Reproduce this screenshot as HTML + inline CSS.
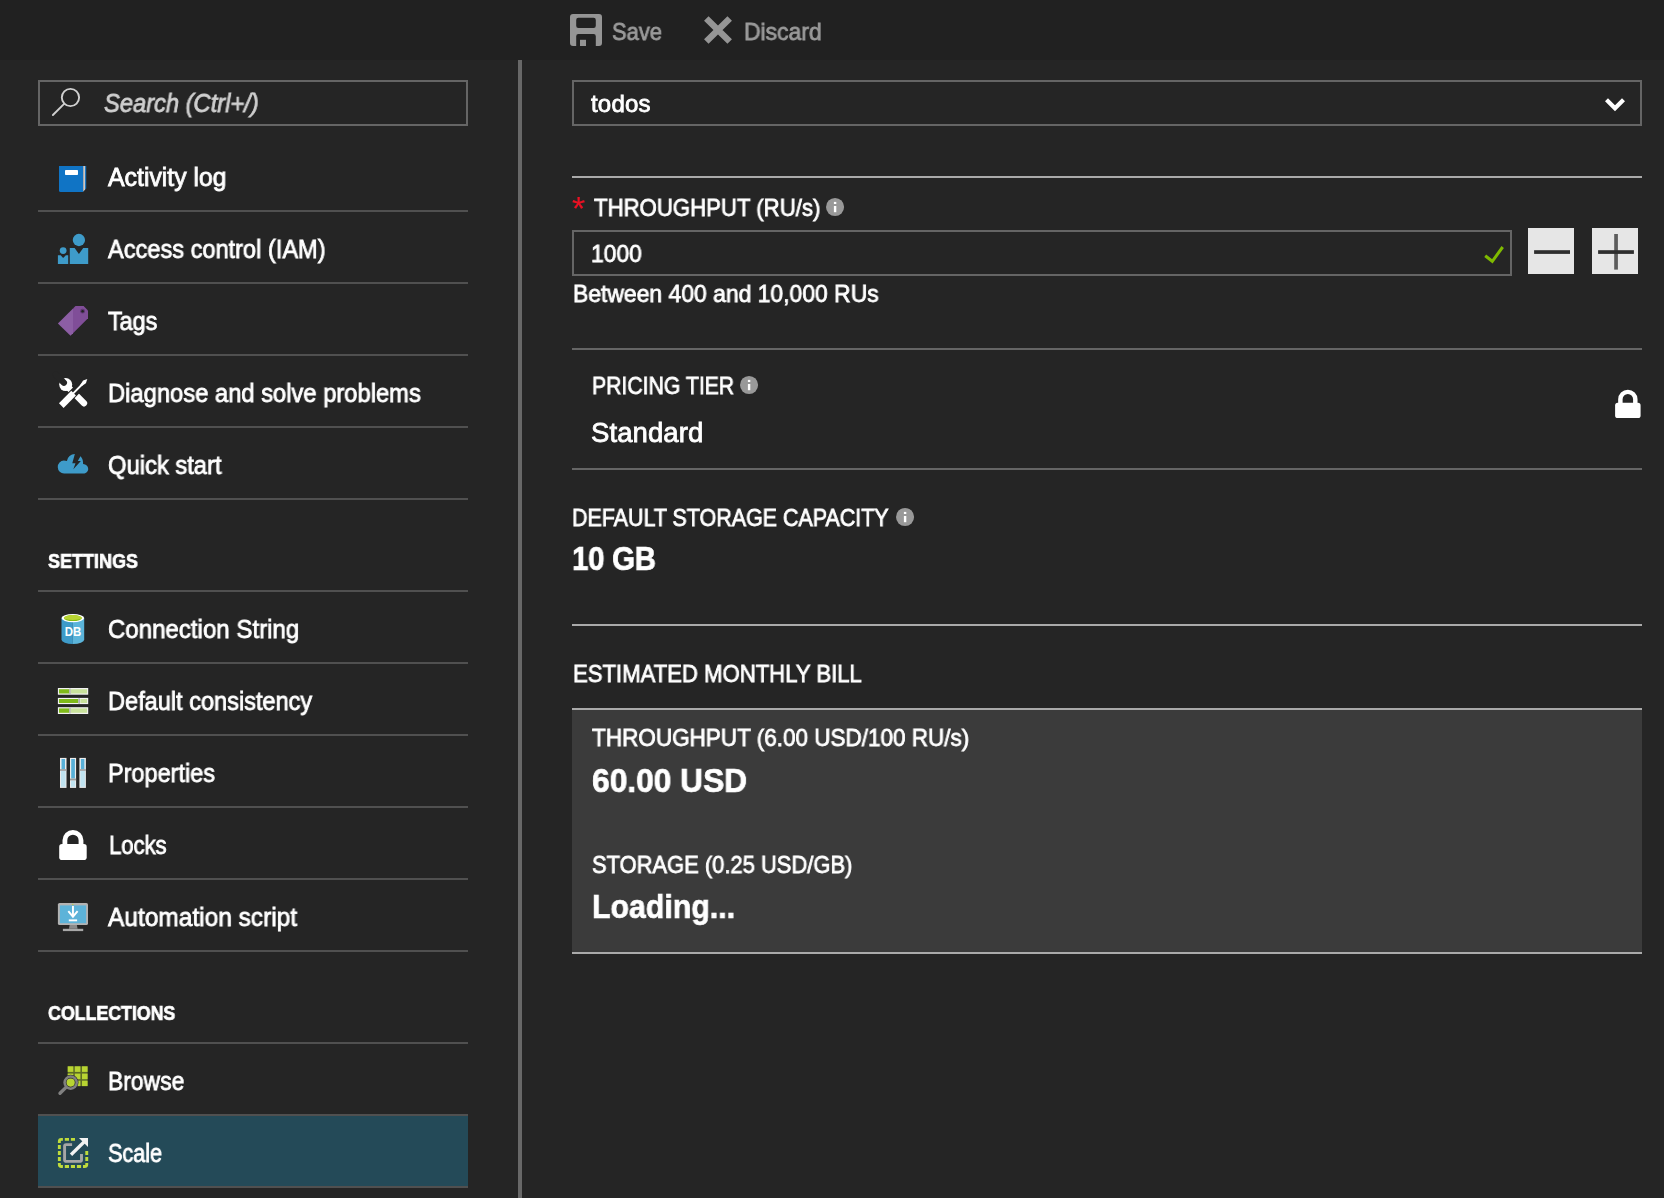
<!DOCTYPE html>
<html lang="en">
<head>
<meta charset="utf-8">
<title>Scale - Azure Cosmos DB</title>
<style>
html,body{margin:0;padding:0;}
body{width:1664px;height:1198px;overflow:hidden;background:#252525;font-family:"Liberation Sans",sans-serif;color:#fff;position:relative;}
.abs{position:absolute;}
.topbar{left:0;top:0;width:1664px;height:60px;background:#212121;}
.vdiv{left:518px;top:60px;width:4px;height:1138px;background:#686868;}
.hl{height:2px;background:#505050;}
.sl{left:38px;width:430px;}
.ml{left:572px;width:1070px;}
.box{box-sizing:border-box;border:2px solid #656565;}
.t{position:absolute;white-space:nowrap;margin:0;padding:0;transform-origin:0 50%;-webkit-text-stroke:0.8px;will-change:transform;}
.b{-webkit-text-stroke:0.7px;}
.sel{left:38px;top:1116px;width:430px;height:70px;background:#244a58;}
.bill{left:572px;top:710px;width:1070px;height:242px;background:#3b3b3b;}
.btn{width:46px;height:46px;top:228px;background:#e6e6e6;}
/*FITCSS*/
</style>
</head>
<body>
<div class="abs topbar deco"></div>
<div class="abs vdiv deco"></div>

<!-- sidebar -->
<div class="abs box deco" style="left:38px;top:80px;width:430px;height:46px;"></div>
<div class="abs hl sl deco" style="top:210px"></div>
<div class="abs hl sl deco" style="top:282px"></div>
<div class="abs hl sl deco" style="top:354px"></div>
<div class="abs hl sl deco" style="top:426px"></div>
<div class="abs hl sl deco" style="top:498px"></div>
<div class="abs hl sl deco" style="top:590px"></div>
<div class="abs hl sl deco" style="top:662px"></div>
<div class="abs hl sl deco" style="top:734px"></div>
<div class="abs hl sl deco" style="top:806px"></div>
<div class="abs hl sl deco" style="top:878px"></div>
<div class="abs hl sl deco" style="top:950px"></div>
<div class="abs hl sl deco" style="top:1042px"></div>
<div class="abs hl sl deco" style="top:1114px"></div>
<div class="abs sel deco"></div>
<div class="abs hl sl deco" style="top:1186px"></div>

<!-- main -->
<div class="abs box deco" style="left:572px;top:80px;width:1070px;height:46px;"></div>
<div class="abs hl ml deco" style="top:176px;background:#aaaaaa"></div>
<div class="abs box deco" style="left:572px;top:230px;width:940px;height:46px;"></div>
<div class="abs btn deco" style="left:1528px"></div>
<div class="abs btn deco" style="left:1592px"></div>
<div class="abs hl ml deco" style="top:348px;background:#656565"></div>
<div class="abs hl ml deco" style="top:468px;background:#656565"></div>
<div class="abs hl ml deco" style="top:624px;background:#aaaaaa"></div>
<div class="abs bill deco"></div>
<div class="abs hl ml deco" style="top:708px;background:#aaaaaa"></div>
<div class="abs hl ml deco" style="top:952px;background:#aaaaaa"></div>

<svg class="ico" width="1664" height="1198" viewBox="0 0 1664 1198" style="position:absolute;left:0;top:0;overflow:visible">
<!-- save icon -->
<g fill="#959595">
<path fill-rule="evenodd" d="M573 14h26a3 3 0 0 1 3 3v26a3 3 0 0 1-3 3h-3.2V36.2a2.2 2.2 0 0 0-2.2-2.2H578.4a2.2 2.2 0 0 0-2.2 2.2V46H573a3 3 0 0 1-3-3V17a3 3 0 0 1 3-3zM578.4 17.8a2.2 2.2 0 0 0-2.2 2.2v5.8a2.2 2.2 0 0 0 2.2 2.2h15.2a2.2 2.2 0 0 0 2.2-2.2V20a2.2 2.2 0 0 0-2.2-2.2z"/>
<rect x="580" y="39.8" width="6" height="6.2"/>
</g>
<!-- discard X -->
<g stroke="#959595" stroke-width="6.4" stroke-linecap="butt" fill="none">
<path d="M706.3 18.4L729.7 41.6M729.7 18.4L706.3 41.6"/>
</g>
<!-- search magnifier -->
<g stroke="#d0d0d0" stroke-width="1.9" fill="none" stroke-linecap="round">
<circle cx="70.45" cy="97.5" r="8.65"/>
<path d="M64.1 103.8L52.9 115"/>
</g>
<!-- activity log book -->
<g>
<path d="M59 166h24.2v26H60.5a1.5 1.5 0 0 1-1.5-1.5z" fill="#1074c5"/>
<path d="M83.2 166h1.9v23.6l-1.9 2.2z" fill="#c8c8c8"/>
<path d="M85.1 166h1.1v22.4l-1.1 1.2z" fill="#1c7fd0"/>
<rect x="65" y="170" width="13" height="5" rx="0.8" fill="#ffffff"/>
</g>
<!-- IAM -->
<g fill="#3e9bc9">
<circle cx="78.9" cy="240" r="6.15"/>
<path d="M69.8 248h4.8l4.3 5.9 4.3-5.9h5V263.9H69.8z"/>
<circle cx="63.15" cy="250.6" r="3.4"/>
<path d="M57.9 255.2h2.75l2.5 2.7 2.7-2.7h2.35V263.9H57.9z"/>
</g>
<!-- tag -->
<g>
<path d="M57.9 323.4L73 308.5V333.2L70.5 335.7z" fill="#8c5ea4"/>
<path d="M73 308.5L75.5 306.1H83.6L88 310.5V318.2L73 333.2z" fill="#804e98"/>
<circle cx="82.6" cy="311.2" r="2.4" fill="#5e3872"/>
<circle cx="82.6" cy="311.2" r="1.25" fill="#252525"/>
</g>
<!-- tools -->
<g>
<!-- wrench -->
<path d="M66 385L84 403.3" stroke="#fff" stroke-width="6.3" stroke-linecap="round" fill="none"/>
<circle cx="65.7" cy="384.6" r="6.5" fill="#fff"/>
<path d="M63.9 382.7L56 374.8" stroke="#252525" stroke-width="6.2" stroke-linecap="round" fill="none"/>
<!-- screwdriver outline gap -->
<path d="M61.3 405.6L73.4 393.3L85 381.2" stroke="#252525" stroke-width="8.6" stroke-linecap="butt" fill="none"/>
<path d="M73.4 393.3L86.5 379.9" stroke="#252525" stroke-width="4.2" stroke-linecap="butt" fill="none"/>
<!-- screwdriver -->
<path d="M61.3 405.6L73.6 393.1" stroke="#fff" stroke-width="6.5" stroke-linecap="butt" fill="none"/>
<path d="M73 393.7L82.5 384" stroke="#fff" stroke-width="1.9" fill="none"/>
<path d="M87.3 379.1L85.9 383.3L81.6 386.3L80.2 384.9L83.1 380.5z" fill="#fff"/>
</g>
<!-- quick start cloud -->
<g>
<path d="M64.2 473.5a6.3 6.5 0 0 1-.3-13c1.1 0 2.1.2 3 .6A8 8 0 0 1 74.9 454.1c4.300 0 7.900 3.400 8.100 7.800l.1 2.1c2.900.3 5.100 2.300 5.100 4.900 0 2.600-2.200 4.600-4.900 4.600z" fill="#3e9bc9"/>
<path d="M75.4 452L72.3 463.2H75.5L73.3 469.2L80.9 460.9H77.8L80.9 455.6L83 452z" fill="#252525"/>
</g>
<!-- DB cylinder -->
<g>
<path d="M61.5 618.1V639.8A11.35 4.2 0 0 0 72.85 644V618.1z" fill="#3e9bc9"/>
<path d="M84.2 618.1V639.8A11.35 4.2 0 0 1 72.85 644V618.1z" fill="#5bb4da"/>
<ellipse cx="72.85" cy="618.1" rx="11.35" ry="4.2" fill="#ffffff"/>
<clipPath id="dbclip"><ellipse cx="72.85" cy="618.1" rx="9" ry="3"/></clipPath>
<ellipse cx="72.85" cy="618.1" rx="9" ry="3" fill="#86bd12"/>
<ellipse cx="72.85" cy="617" rx="10.5" ry="2.9" fill="#b8d432" clip-path="url(#dbclip)"/>
<text x="72.95" y="636.1" text-anchor="middle" font-family="Liberation Sans, sans-serif" font-weight="bold" font-size="12.5" fill="#ffffff" textLength="16.6" lengthAdjust="spacingAndGlyphs">DB</text>
</g>
<!-- consistency -->
<g>
<rect x="57.9" y="688" width="30.3" height="6.7" fill="#f2f2f2"/>
<rect x="59" y="689.2" width="10.2" height="4.3" fill="#7fba1a"/>
<rect x="69.4" y="688.6" width="1.2" height="5.5" fill="#a0a0a0"/>
<rect x="70.8" y="689.2" width="16.3" height="4.3" fill="#c9e29c"/>
<rect x="57.9" y="697.9" width="30.3" height="6.2" fill="#f2f2f2"/>
<rect x="59" y="699" width="19.2" height="4" fill="#7fba1a"/>
<rect x="78.4" y="698.4" width="1.4" height="5.2" fill="#a0a0a0"/>
<rect x="80.4" y="699" width="6.7" height="4" fill="#c9e29c"/>
<rect x="57.9" y="707.2" width="30.3" height="6.8" fill="#f2f2f2"/>
<rect x="59" y="708.4" width="10.2" height="4.4" fill="#7fba1a"/>
<rect x="69.4" y="707.8" width="1.2" height="5.6" fill="#a0a0a0"/>
<rect x="70.8" y="708.4" width="16.3" height="4.4" fill="#c9e29c"/>
</g>
<!-- properties -->
<g>
<rect x="60" y="757.9" width="6.5" height="30" fill="#ececec"/>
<rect x="61.5" y="759" width="3.5" height="10.2" fill="#58b0d8"/>
<rect x="61" y="771" width="4.5" height="15.8" fill="#c0e3f0"/>
<rect x="60" y="769.2" width="6.5" height="1.6" fill="#9a9a9a"/>
<rect x="70" y="757.9" width="6.1" height="30" fill="#ececec"/>
<rect x="71.2" y="759" width="3.7" height="19.5" fill="#58b0d8"/>
<rect x="71" y="780.6" width="4.1" height="6.2" fill="#c0e3f0"/>
<rect x="70" y="778.6" width="6.1" height="1.8" fill="#9a9a9a"/>
<rect x="79.4" y="757.9" width="6.5" height="30" fill="#ececec"/>
<rect x="80.9" y="759" width="3.5" height="10.2" fill="#58b0d8"/>
<rect x="80.4" y="771" width="4.5" height="15.8" fill="#c0e3f0"/>
<rect x="79.4" y="769.2" width="6.5" height="1.6" fill="#9a9a9a"/>
</g>
<!-- lock (sidebar) -->
<g id="lockshape">
<path d="M64.9 846V840.35a8.05 8.05 0 0 1 16.100 0V846" stroke="#fff" stroke-width="4.8" fill="none"/>
<rect x="59.2" y="844.1" width="27.5" height="16" rx="2.8" fill="#fff"/>
</g>
<!-- lock (pricing) -->
<g transform="translate(1615.1 402.8) scale(0.927) translate(-59.2 -844.1)">
<path d="M64.9 846V840.35a8.05 8.05 0 0 1 16.100 0V846" stroke="#fff" stroke-width="4.8" fill="none"/>
<rect x="59.2" y="844.1" width="27.5" height="16.5" rx="2.8" fill="#fff"/>
</g>
<!-- automation script monitor -->
<g>
<rect x="57.9" y="902.9" width="30.1" height="22.1" rx="1.6" fill="#b3b3b3"/>
<rect x="59.9" y="905.4" width="26.2" height="17.8" fill="#5db3d9"/>
<path d="M69.6 925H76.9L77.6 928.8H68.9z" fill="#8a8a8a"/>
<rect x="62.9" y="928.8" width="20.3" height="2.3" fill="#a8a8a8"/>
<rect x="72" y="903.9" width="1.4" height="0.9" fill="#b8d432"/>
<path d="M72.96 906V917" stroke="#fff" stroke-width="1.9" fill="none"/>
<path d="M68.3 911.2L72.96 916.7L77.6 911.2" stroke="#fff" stroke-width="1.9" fill="none"/>
<rect x="68.8" y="919.4" width="8.3" height="1.9" fill="#fff"/>
</g>
<!-- browse -->
<g>
<rect x="67.7" y="1066.3" width="19.9" height="19.8" fill="#5c6b26"/>
<g fill="#b8d432">
<rect x="67.7" y="1066.3" width="5.6" height="5.6"/><rect x="74.8" y="1066.3" width="5.6" height="5.6"/><rect x="82" y="1066.3" width="5.6" height="5.6"/>
<rect x="67.7" y="1073.6" width="5.6" height="5.6"/><rect x="74.8" y="1073.6" width="5.6" height="5.6"/><rect x="82" y="1073.6" width="5.6" height="5.6"/>
<rect x="67.700" y="1080.7" width="5.6" height="5.4"/><rect x="74.800" y="1080.7" width="5.6" height="5.4"/><rect x="82" y="1080.7" width="5.6" height="5.4"/>
</g>
<circle cx="70.66" cy="1082.6" r="7.8" fill="#252525"/>
<path d="M66 1087.4L60 1093.2" stroke="#808080" stroke-width="3.4" stroke-linecap="round" fill="none"/>
<circle cx="70.66" cy="1082.6" r="6.1" fill="#2a2a33" stroke="#808080" stroke-width="2.5"/>
<circle cx="70.66" cy="1082.600" r="4.1" fill="#b8d432"/>
</g>
<!-- scale -->
<g>
<path d="M59.35 1142.9V1141.35a2 2 0 0 1 2-2H62.9M64.8 1139.35H69M70.9 1139.35H75M59.35 1145V1148.9M59.35 1151V1155M59.35 1157.1V1161M59.35 1163.1V1164.45a2 2 0 0 0 2 2H62.9M64.8 1166.45H69M70.9 1166.45H75M76.9 1166.45H81.1M83 1166.45H84.75a2 2 0 0 0 2-2V1163.1M86.75 1161V1157.1M86.75 1155V1151" stroke="#bfdb3c" stroke-width="2.9" fill="none"/>
<path d="M72.1 1144.6H66.100a1.500 1.500 0 0 0-1.500 1.500V1159.900a1.500 1.500 0 0 0 1.500 1.500H80a1.500 1.500 0 0 0 1.500-1.500V1154" stroke="#a6a6a6" stroke-width="2.9" fill="none"/>
<path d="M71 1154.800L84 1142" stroke="#f2f2f2" stroke-width="3.300" fill="none"/>
<path d="M79 1138.100H88V1146.900z" fill="#f2f2f2"/>
</g>
<!-- chevron -->
<path d="M1606.5 99.700L1615 108.300L1623.500 99.700" stroke="#fff" stroke-width="4.2" fill="none"/>
<!-- check -->
<path d="M1485.2 255.800L1492.300 261.300L1502.700 247" stroke="#7fba00" stroke-width="3" fill="none"/>
<!-- minus / plus -->
<rect x="1534.1" y="250.2" width="35.9" height="3.7" fill="#2e2e2e"/>
<rect x="1614.2" y="234" width="3.7" height="35.600" fill="#5c5c5c"/>
<rect x="1598.1" y="250.2" width="35.8" height="3.7" fill="#2e2e2e"/>
<!-- info icons -->
<g fill="#999999">
<circle cx="835.05" cy="207" r="9.05"/><circle cx="749.05" cy="385" r="9.05"/><circle cx="905.05" cy="517" r="9.05"/>
</g>
<g fill="#ffffff">
<rect x="833.9" y="206" width="2.4" height="6.2"/><rect x="833.9" y="201.900" width="2.4" height="2.1"/>
<rect x="747.9" y="384" width="2.4" height="6.2"/><rect x="747.9" y="379.900" width="2.4" height="2.1"/>
<rect x="903.9" y="516" width="2.4" height="6.2"/><rect x="903.9" y="511.900" width="2.4" height="2.1"/>
</g>
<!-- required star -->
</svg>


<div class="t ico" id="t_star" style="-webkit-text-stroke:0.2px;left:571.8px;top:190.6px;font-size:34px;line-height:34px;color:#e81123;">*</div>
<div class="t" id="t_save" style="left:611.50px;top:17.01px;font-size:24px;line-height:29px;color:#9a9a9a;letter-spacing:0.073px;transform:scaleX(0.9113);">Save</div>
<div class="t" id="t_discard" style="left:743.50px;top:17.01px;font-size:24px;line-height:29px;color:#9a9a9a;letter-spacing:-0.035px;transform:scaleX(0.9582);">Discard</div>
<div class="t" id="t_search" style="left:104.00px;top:88.01px;font-size:25px;line-height:30px;color:#cfcfcf;letter-spacing:-0.015px;transform:scaleX(0.9488);font-style:italic;">Search (Ctrl+/)</div>
<div class="t" id="t_act" style="left:107.50px;top:162.01px;font-size:25px;line-height:30px;color:#ffffff;letter-spacing:-0.073px;transform:scaleX(0.9983);">Activity log</div>
<div class="t" id="t_iam" style="left:107.50px;top:234.01px;font-size:25px;line-height:30px;color:#ffffff;letter-spacing:0.022px;transform:scaleX(0.9417);">Access control (IAM)</div>
<div class="t" id="t_tags" style="left:108.00px;top:306.01px;font-size:25px;line-height:30px;color:#ffffff;letter-spacing:-0.142px;transform:scaleX(0.9404);">Tags</div>
<div class="t" id="t_diag" style="left:108.00px;top:378.01px;font-size:25px;line-height:30px;color:#ffffff;letter-spacing:-0.008px;transform:scaleX(0.9503);">Diagnose and solve problems</div>
<div class="t" id="t_quick" style="left:107.50px;top:450.01px;font-size:25px;line-height:30px;color:#ffffff;letter-spacing:-0.063px;transform:scaleX(0.9546);">Quick start</div>
<div class="t b" id="t_settings" style="left:48.00px;top:549.01px;font-size:20px;line-height:24px;color:#ffffff;letter-spacing:0.064px;transform:scaleX(0.8960);font-weight:600;">SETTINGS</div>
<div class="t" id="t_conn" style="left:107.50px;top:614.01px;font-size:25px;line-height:30px;color:#ffffff;letter-spacing:0.026px;transform:scaleX(0.9599);">Connection String</div>
<div class="t" id="t_cons" style="left:108.00px;top:686.01px;font-size:25px;line-height:30px;color:#ffffff;letter-spacing:-0.024px;transform:scaleX(0.9440);">Default consistency</div>
<div class="t" id="t_prop" style="left:108.00px;top:758.01px;font-size:25px;line-height:30px;color:#ffffff;letter-spacing:0.024px;transform:scaleX(0.9363);">Properties</div>
<div class="t" id="t_locks" style="left:108.50px;top:830.01px;font-size:25px;line-height:30px;color:#ffffff;letter-spacing:-0.112px;transform:scaleX(0.8891);">Locks</div>
<div class="t" id="t_auto" style="left:108.00px;top:902.01px;font-size:25px;line-height:30px;color:#ffffff;letter-spacing:0.038px;transform:scaleX(0.9763);">Automation script</div>
<div class="t b" id="t_coll" style="left:48.00px;top:1001.01px;font-size:20px;line-height:24px;color:#ffffff;letter-spacing:-0.067px;transform:scaleX(0.8923);font-weight:600;">COLLECTIONS</div>
<div class="t" id="t_browse" style="left:108.00px;top:1066.01px;font-size:25px;line-height:30px;color:#ffffff;letter-spacing:0.044px;transform:scaleX(0.9122);">Browse</div>
<div class="t" id="t_scale" style="left:107.50px;top:1138.01px;font-size:25px;line-height:30px;color:#ffffff;letter-spacing:-0.115px;transform:scaleX(0.8700);">Scale</div>
<div class="t" id="t_todos" style="left:591.00px;top:89.01px;font-size:24px;line-height:29px;color:#ffffff;letter-spacing:0.200px;">todos</div>
<div class="t" id="t_thr" style="left:594.00px;top:193.01px;font-size:24px;line-height:29px;color:#ffffff;transform:scaleX(0.9242);">THROUGHPUT (RU/s)</div>
<div class="t" id="t_1000" style="left:590.50px;top:239.01px;font-size:24px;line-height:29px;color:#ffffff;transform:scaleX(0.9519);">1000</div>
<div class="t" id="t_between" style="left:572.50px;top:279.01px;font-size:24px;line-height:29px;color:#ffffff;transform:scaleX(0.9545);">Between 400 and 10,000 RUs</div>
<div class="t" id="t_pricing" style="left:592.00px;top:371.01px;font-size:24px;line-height:29px;color:#ffffff;transform:scaleX(0.8836);">PRICING TIER</div>
<div class="t" id="t_standard" style="left:591.00px;top:416.00px;font-size:27.5px;line-height:33px;color:#ffffff;letter-spacing:0.086px;">Standard</div>
<div class="t" id="t_defstor" style="left:572.00px;top:503.01px;font-size:24px;line-height:29px;color:#ffffff;letter-spacing:-0.019px;transform:scaleX(0.8949);">DEFAULT STORAGE CAPACITY</div>
<div class="t b" id="t_10gb" style="left:571.50px;top:538.00px;font-size:34px;line-height:41px;color:#ffffff;letter-spacing:-0.402px;transform:scaleX(0.8700);font-weight:600;">10 GB</div>
<div class="t" id="t_est" style="left:572.50px;top:659.01px;font-size:24px;line-height:29px;color:#ffffff;letter-spacing:-0.021px;transform:scaleX(0.9228);">ESTIMATED MONTHLY BILL</div>
<div class="t" id="t_thr2" style="left:592.00px;top:723.01px;font-size:24px;line-height:29px;color:#ffffff;letter-spacing:-0.029px;transform:scaleX(0.9397);">THROUGHPUT (6.00 USD/100 RU/s)</div>
<div class="t b" id="t_60" style="left:591.50px;top:760.00px;font-size:34px;line-height:41px;color:#ffffff;letter-spacing:-0.027px;transform:scaleX(0.9341);font-weight:600;">60.00 USD</div>
<div class="t" id="t_stor" style="left:592.00px;top:850.01px;font-size:24px;line-height:29px;color:#ffffff;letter-spacing:0.022px;transform:scaleX(0.9120);">STORAGE (0.25 USD/GB)</div>
<div class="t b" id="t_loading" style="left:592.00px;top:886.00px;font-size:34px;line-height:41px;color:#ffffff;letter-spacing:0.025px;transform:scaleX(0.8904);font-weight:600;">Loading...</div>
</body>
</html>
